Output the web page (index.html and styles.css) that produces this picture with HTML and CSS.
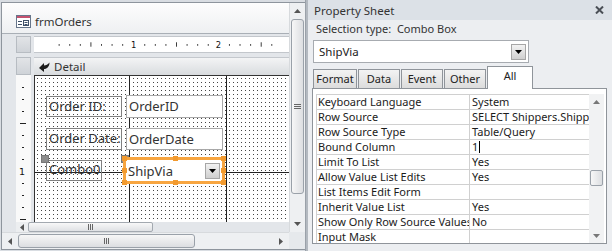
FILE: index.html
```html
<!DOCTYPE html>
<html lang="en">
<head>
    <meta charset="utf-8">
    <title>frmOrders - Property Sheet</title>
    <link rel="stylesheet" href="styles.css">
</head>
<body>
<div class="app">

    <!-- form design window -->
    <div class="form-win">
        <div class="fw-main">
            <div class="fw-title">
                <svg class="form-icon" width="15" height="13" viewBox="0 0 15 13">
                    <rect x="0.5" y="0.5" width="14" height="12" fill="#fff" stroke="#66758a"/>
                    <rect x="1" y="1" width="13" height="2" fill="#c4526f"/>
                    <path d="M2 6.5h4M2 9.5h4" stroke="#3f5068"/>
                    <rect x="7.5" y="5.5" width="5" height="5" fill="none" stroke="#3f5068"/>
                    <path d="M8.5 7.5h3M8.5 9.5h3" stroke="#3f5068"/>
                </svg>
                <span>frmOrders</span>
            </div>
            <div class="design">
                <div class="d-row ruler-row">
                    <div class="corner"></div>
                    <svg class="hruler" width="255" height="17" viewBox="0 0 255 17">
                        <g stroke="#222" stroke-width="1">
                            <path d="M11.5 8v2M23.5 8v2M35.5 8v2M47.5 6v5M59.5 8v2M71.5 8v2M83.5 8v2"/>
                            <path d="M108.5 8v2M120.5 8v2M132.5 8v2M144.5 6v5M156.5 8v2M168.5 8v2M180.5 8v2"/>
                            <path d="M204.5 8v2M216.5 8v2M228.5 8v2M240.5 6v5M252.5 8v2"/>
                        </g>
                        <text x="96" y="12.5" class="r-num" text-anchor="middle">1</text>
                        <text x="192" y="12.5" class="r-num" text-anchor="middle">2</text>
                    </svg>
                </div>
                <div class="d-row section-row">
                    <div class="corner"></div>
                    <div class="section-bar">
                        <svg width="11" height="10" viewBox="0 0 11 10">
                            <path d="M0 6 L5 1 L5 3.5 C7 3.5 9 2.5 10.5 0.5 C10.5 4.5 8 7 5 7 L5 10 Z" fill="#1a1a1a"/>
                        </svg>
                        <span>Detail</span>
                    </div>
                </div>
                <div class="d-row canvas-row">
                    <svg class="vruler" width="15" height="147" viewBox="0 0 15 147">
                        <g stroke="#222" stroke-width="1">
                            <path d="M6 12.5h2M6 24.5h2M6 36.5h2M4 48.5h6M6 60.5h2M6 72.5h2M6 84.5h2"/>
                            <path d="M6 108.5h2M6 120.5h2M6 132.5h2M4 144.5h6"/>
                        </g>
                        <text x="6" y="100" class="r-num" text-anchor="middle">1</text>
                    </svg>
                    <div class="grid">
                        <div class="ctl lbl lbl-id">Order ID:</div>
                        <div class="ctl txt txt-id">OrderID</div>
                        <div class="ctl lbl lbl-date">Order Date:</div>
                        <div class="ctl txt txt-date">OrderDate</div>
                        <div class="ctl lbl lbl-combo">Combo0</div>
                        <div class="move-handle mh-1"></div>
                        <div class="move-handle mh-2"></div>
                        <div class="ctl combo-sel">
                            <span>ShipVia</span>
                            <div class="drop-btn"><svg width="7" height="4" viewBox="0 0 7 4"><path d="M0 0h7L3.5 4z" fill="#000"/></svg></div>
                            <i class="sh sh-tl"></i><i class="sh sh-tm"></i><i class="sh sh-tr"></i>
                            <i class="sh sh-ml"></i><i class="sh sh-mr"></i>
                            <i class="sh sh-bl"></i><i class="sh sh-bm"></i><i class="sh sh-br"></i>
                        </div>
                    </div>
                </div>
                <div class="d-row mini-scroll">
                    <div class="ms-arrow"><svg width="4" height="7" viewBox="0 0 4 7"><path d="M4 0v7L0 3.5z" fill="#555"/></svg></div>
                    <div class="ms-thumb"><span class="grip-v"></span></div>
                </div>
            </div>
        </div>

        <div class="vscroll">
            <div class="sb-arrow"><svg width="7" height="4" viewBox="0 0 7 4"><path d="M0 4h7L3.5 0z" fill="#555"/></svg></div>
            <div class="vs-thumb"><span class="grip-h"></span></div>
            <div class="sb-fill"></div>
            <div class="sb-arrow"><svg width="7" height="4" viewBox="0 0 7 4"><path d="M0 0h7L3.5 4z" fill="#555"/></svg></div>
        </div>

        <div class="hscroll">
            <div class="sb-arrow"><svg width="4" height="7" viewBox="0 0 4 7"><path d="M4 0v7L0 3.5z" fill="#555"/></svg></div>
            <div class="hs-thumb"><span class="grip-v"></span></div>
            <div class="sb-fill"></div>
            <div class="sb-arrow"><svg width="4" height="7" viewBox="0 0 4 7"><path d="M0 0v7L4 3.5z" fill="#555"/></svg></div>
        </div>
        <div class="sb-corner"></div>
    </div>

    <div class="splitter"></div>

    <!-- property sheet -->
    <div class="props">
        <div class="ps-title">
            <span>Property Sheet</span>
            <svg width="9" height="8" viewBox="0 0 9 8"><path d="M1 0.5L8 7.5M8 0.5L1 7.5" stroke="#4a4f56" stroke-width="2"/></svg>
        </div>
        <div class="ps-sel">Selection type:&nbsp;&nbsp;Combo Box</div>
        <div class="ps-combo">
            <span>ShipVia</span>
            <div class="drop-btn"><svg width="7" height="4" viewBox="0 0 7 4"><path d="M0 0h7L3.5 4z" fill="#000"/></svg></div>
        </div>
        <div class="ps-tabs">
            <div class="tab tab-format">Format</div>
            <div class="tab">Data</div>
            <div class="tab">Event</div>
            <div class="tab">Other</div>
            <div class="tab active">All</div>
        </div>
        <div class="ps-panel">
            <div class="prop-rows">
                <div class="prop-row"><span class="p-name">Keyboard Language</span><span class="p-val">System</span></div>
                <div class="prop-row"><span class="p-name">Row Source</span><span class="p-val">SELECT Shippers.ShipperID</span></div>
                <div class="prop-row"><span class="p-name">Row Source Type</span><span class="p-val">Table/Query</span></div>
                <div class="prop-row"><span class="p-name">Bound Column</span><span class="p-val">1<i class="caret"></i></span></div>
                <div class="prop-row"><span class="p-name">Limit To List</span><span class="p-val">Yes</span></div>
                <div class="prop-row"><span class="p-name">Allow Value List Edits</span><span class="p-val">Yes</span></div>
                <div class="prop-row"><span class="p-name">List Items Edit Form</span><span class="p-val"></span></div>
                <div class="prop-row"><span class="p-name">Inherit Value List</span><span class="p-val">Yes</span></div>
                <div class="prop-row"><span class="p-name">Show Only Row Source Values</span><span class="p-val">No</span></div>
                <div class="prop-row"><span class="p-name">Input Mask</span><span class="p-val"></span></div>
            </div>
            <div class="ps-vscroll">
                <div class="sb-arrow"><svg width="7" height="4" viewBox="0 0 7 4"><path d="M0 4h7L3.5 0z" fill="#777"/></svg></div>
                <div class="sb-fill sb-top"></div>
                <div class="ps-thumb"></div>
                <div class="sb-fill"></div>
                <div class="sb-arrow"><svg width="7" height="4" viewBox="0 0 7 4"><path d="M0 0h7L3.5 4z" fill="#777"/></svg></div>
            </div>
        </div>
    </div>

</div>
</body>
</html>
```

FILE: styles.css
```css
* {
    box-sizing: border-box;
}

body {
    margin: 0;
    width: 612px;
    height: 251px;
    overflow: hidden;
    background-color: #d9dde2;
    font-family: "Noto Sans", "Open Sans", sans-serif;
    color: #222;
}

.app {
    display: flex;
    height: 251px;
}

/* ---------- form window ---------- */

.form-win {
    width: 304px;
    margin: 2px 0 1px 1px;
    border: 1px solid #8e959d;
    border-right: none;
    display: grid;
    grid-template-columns: 287px 16px;
    grid-template-rows: 229px 17px;
    background-color: #e6e9ec;
}

.fw-main {
    display: flex;
    flex-direction: column;
    overflow: hidden;
}

.fw-title {
    height: 30px;
    display: flex;
    align-items: center;
    gap: 4px;
    padding-left: 14px;
    padding-top: 6px;
    background: linear-gradient(#fdfdfd, #eef0f2);
    font-size: 11.5px;
    color: #333;
}

.design {
    flex: 1;
    border-top: 1px solid #a9afb6;
    padding-top: 2px;
    background-color: #e3e6ea;
    display: flex;
    flex-direction: column;
}

.d-row {
    display: flex;
    padding-left: 14px;
    gap: 3px;
}

.corner {
    width: 15px;
    background: linear-gradient(#e2e4e7, #cfd3d8);
    border: 1px solid #b7bcc2;
}

.ruler-row {
    height: 17px;
}

.hruler {
    display: block;
    background-color: #fff;
    border-top: 1px solid #c3c7cc;
    border-bottom: 1px solid #c3c7cc;
}

.r-num {
    font-family: "DejaVu Sans", sans-serif;
    font-size: 9.5px;
    fill: #111;
}

.section-row {
    height: 18px;
    margin-top: 4px;
}

.section-bar {
    flex: 1;
    display: flex;
    align-items: center;
    gap: 4px;
    padding-left: 5px;
    background: linear-gradient(#f3f4f5, #d9dcdf);
    border-top: 1px solid #c4c8cd;
    font-size: 11.5px;
    color: #333;
}

.canvas-row {
    height: 147px;
}

.vruler {
    display: block;
    background-color: #f9f9f9;
}

.grid {
    flex: 1;
    position: relative;
    border-left: 1px solid #333;
    border-top: 1px solid #333;
    background-color: #fff;
    background-image:
        linear-gradient(#222, #222),
        linear-gradient(#222, #222),
        linear-gradient(#222, #222),
        conic-gradient(from 0deg at 1px 1px, transparent 75%, #454545 0);
    background-size: 100% 1px, 1px 100%, 1px 100%, 4px 4px;
    background-position: 0 96px, 94px 0, 191px 0, 2px 2px;
    background-repeat: no-repeat, no-repeat, no-repeat, repeat;
}

/* design controls sit on the form canvas */
.ctl {
    position: absolute;
    font-size: 13px;
    color: #333;
    white-space: nowrap;
    overflow: hidden;
}

.lbl {
    border: 1px solid #808080;
    padding-left: 2px;
    line-height: 19px;
}

.txt {
    border: 1px solid #a8a8a8;
    background-color: #fff;
    padding-left: 2px;
    line-height: 20px;
}

.lbl-id { left: 11px; top: 20px; width: 76px; height: 21px; }
.txt-id { left: 91px; top: 19px; width: 97px; height: 23px; }
.lbl-date { left: 11px; top: 52px; width: 76px; height: 22px; }
.txt-date { left: 91px; top: 52px; width: 97px; height: 22px; }
.lbl-combo { left: 11px; top: 84px; width: 56px; height: 21px; line-height: 16px; }

.move-handle {
    position: absolute;
    width: 8px;
    height: 8px;
    background-color: #8c8c8c;
    border: 1px solid #777;
    top: 79px;
}

.mh-1 { left: 6px; }
.mh-2 { left: 86px; }

.combo-sel {
    left: 88px;
    top: 81px;
    width: 102px;
    height: 27px;
    border: 3px solid #f7a540;
    background-color: #fff;
    overflow: visible;
    display: flex;
    align-items: center;
    padding-left: 2px;
}

.combo-sel span {
    flex: 1;
}

.combo-sel .drop-btn {
    margin-right: 2px;
}

.drop-btn {
    width: 15px;
    height: 16px;
    display: flex;
    align-items: center;
    justify-content: center;
    background: linear-gradient(#f2f2f2, #cfcfcf);
    border: 1px solid #a6a6a6;
}

.sh {
    position: absolute;
    width: 5px;
    height: 5px;
    background-color: #f29a2e;
}

.sh-tl { left: -4px; top: -4px; }
.sh-tm { left: 47px; top: -4px; }
.sh-tr { right: -4px; top: -4px; }
.sh-ml { left: -4px; top: 8px; }
.sh-mr { right: -4px; top: 8px; }
.sh-bl { left: -4px; bottom: -4px; }
.sh-bm { left: 47px; bottom: -4px; }
.sh-br { right: -4px; bottom: -4px; }

.mini-scroll {
    height: 10px;
    gap: 0;
    align-items: stretch;
}

.ms-arrow {
    width: 12px;
    display: flex;
    align-items: center;
    justify-content: center;
    background-color: #eceef0;
}

.ms-thumb {
    width: 125px;
    border: 1px solid #a3a9b0;
    border-radius: 2px;
    background: linear-gradient(#f8f8f8, #dfe1e4);
    display: flex;
    align-items: center;
    justify-content: center;
}

/* ---------- scrollbars ---------- */

.vscroll {
    grid-row: 1;
    grid-column: 2;
    display: flex;
    flex-direction: column;
    background-color: #eef0f2;
    border-left: 1px solid #d7dadd;
}

.hscroll {
    grid-row: 2;
    grid-column: 1;
    display: flex;
    background-color: #eef0f2;
    border-top: 1px solid #d7dadd;
}

.sb-corner {
    grid-row: 2;
    grid-column: 2;
    background-color: #e6e9ec;
}

.sb-arrow {
    flex: 0 0 16px;
    display: flex;
    align-items: center;
    justify-content: center;
}

.sb-fill {
    flex: 1;
}

.vs-thumb {
    height: 175px;
    margin: 0 1px;
    border: 1px solid #9aa1a9;
    border-radius: 3px;
    background: linear-gradient(90deg, #f7f7f7, #dcdee1);
    display: flex;
    align-items: center;
    justify-content: center;
}

.hs-thumb {
    width: 177px;
    margin: 1px 0;
    border: 1px solid #9aa1a9;
    border-radius: 3px;
    background: linear-gradient(#f7f7f7, #dcdee1);
    display: flex;
    align-items: center;
    justify-content: center;
}

.grip-h {
    width: 7px;
    height: 5px;
    border-top: 1px solid #666;
    border-bottom: 1px solid #666;
    background: linear-gradient(#666, #666) center / 100% 1px no-repeat;
}

.grip-v {
    width: 5px;
    height: 6px;
    border-left: 1px solid #666;
    border-right: 1px solid #666;
    background: linear-gradient(#666, #666) center / 1px 100% no-repeat;
}

.splitter {
    width: 3px;
    background-color: #b3b9c0;
    border-left: 1px solid #9aa1a9;
}

/* ---------- property sheet ---------- */

.props {
    width: 304px;
    background-color: #eceef1;
    display: flex;
    flex-direction: column;
    font-size: 11px;
}

.ps-title {
    height: 20px;
    display: flex;
    align-items: center;
    justify-content: space-between;
    padding: 0 8px 0 6px;
    background-color: #dce1e7;
    font-size: 11.5px;
    color: #333;
}

.ps-sel {
    height: 17px;
    padding-left: 8px;
    line-height: 17px;
    color: #333;
}

.ps-combo {
    width: 216px;
    height: 23px;
    margin: 3px 0 0 5px;
    border: 1px solid #a7abb0;
    background-color: #fff;
    display: flex;
    align-items: center;
    padding: 0 2px 0 5px;
    font-size: 11.5px;
}

.ps-combo span {
    flex: 1;
}

.ps-tabs {
    height: 22px;
    margin-top: 3px;
    padding-left: 5px;
    display: flex;
    align-items: flex-end;
    gap: 1px;
}

.tab {
    width: 42px;
    height: 19px;
    border: 1px solid #8f949a;
    border-bottom: none;
    background: linear-gradient(#f3f3f3, #dcdcdc);
    text-align: center;
    line-height: 18px;
    color: #222;
}

.tab-format {
    width: 44px;
}

.tab.active {
    width: 46px;
    height: 23px;
    background: #fff;
    position: relative;
    top: 1px;
    line-height: 18px;
}

.ps-panel {
    height: 156px;
    margin: 0 5px 0 4px;
    border: 1px solid #8f949a;
    background-color: #fff;
    padding: 5px 2px 0 3px;
    display: flex;
    overflow: hidden;
}

.prop-rows {
    width: 273px;
    border-top: 1px solid #d0d0d0;
    border-left: 1px solid #d0d0d0;
}

.prop-row {
    display: flex;
    height: 15px;
    border-bottom: 1px solid #d0d0d0;
    line-height: 14px;
    color: #1b1b1b;
}

.p-name {
    width: 153px;
    flex: 0 0 153px;
    padding-left: 1px;
    border-right: 1px solid #d0d0d0;
    white-space: nowrap;
    overflow: hidden;
}

.p-val {
    flex: 1;
    padding-left: 2px;
    white-space: nowrap;
    overflow: hidden;
}

.caret {
    display: inline-block;
    width: 1px;
    height: 12px;
    margin-left: 1px;
    vertical-align: -2px;
    background-color: #000;
}

.ps-vscroll {
    width: 15px;
    display: flex;
    flex-direction: column;
    background-color: #f1f2f3;
}

.ps-vscroll .sb-arrow {
    flex-basis: 15px;
}

.sb-top {
    flex: 0 0 61px;
}

.ps-thumb {
    height: 16px;
    margin: 0 1px;
    border: 1px solid #9aa1a9;
    border-radius: 2px;
    background: linear-gradient(90deg, #f7f7f7, #dcdee1);
}
```
